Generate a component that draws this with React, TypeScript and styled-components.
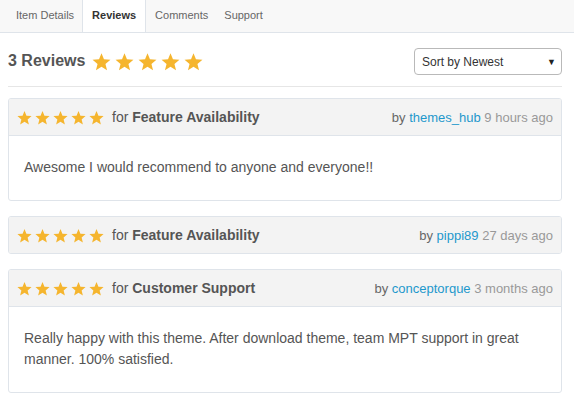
import React from "react";
import styled, { createGlobalStyle } from "styled-components";

const Global = createGlobalStyle`
  html, body { margin: 0; padding: 0; background: #fff; }
  body { font-family: "Liberation Sans", Arial, sans-serif; color: #555; }
  * { box-sizing: border-box; }
`;

const Page = styled.div`
  width: 574px;
  height: 393px;
  overflow: hidden;
`;

const TabBar = styled.nav`
  display: flex;
  height: 33px;
  padding-left: 8px;
  background: #f8f8f8;
  border-bottom: 1px solid #dfe4ea;
`;

const Tab = styled.div<{ $active?: boolean }>`
  display: flex;
  align-items: center;
  padding: 0 ${(p) => (p.$active ? 9 : 8)}px 3px;
  margin-right: ${(p) => (p.$active ? 1 : 0)}px;
  height: 32px;
  font-size: 11px;
  color: ${(p) => (p.$active ? "#333" : "#666")};
  font-weight: ${(p) => (p.$active ? 700 : 400)};
  background: ${(p) => (p.$active ? "#fff" : "transparent")};
  border-left: ${(p) => (p.$active ? "1px solid #dfe4ea" : "none")};
  border-right: ${(p) => (p.$active ? "1px solid #dfe4ea" : "none")};
`;

const Content = styled.div`
  padding: 0 12px 0 8px;
`;

const TitleRow = styled.div`
  display: flex;
  align-items: center;
  justify-content: space-between;
  height: 54px;
  border-bottom: 1px solid #e6e6e6;
  margin-bottom: 11px;
`;

const Title = styled.h2`
  display: flex;
  align-items: center;
  margin: 3px 0 0;
  font-size: 16px;
  font-weight: 700;
  color: #555;
  gap: 7px;
`;

const Stars = styled.span<{ $size: number; $gap: number }>`
  display: inline-flex;
  gap: ${(p) => p.$gap}px;
  svg {
    width: ${(p) => p.$size}px;
    height: ${(p) => p.$size}px;
    display: block;
  }
`;

const SortBox = styled.div`
  position: relative;
  display: flex;
  align-items: center;
  width: 148px;
  height: 27px;
  margin-top: 4px;
  padding: 0 7px;
  border: 1px solid #b9b9b9;
  border-radius: 4px;
  font-size: 12px;
  color: #333;
  background: #fff;
`;

const Caret = styled.span`
  position: absolute;
  right: 5px;
  top: 50%;
  transform: translateY(-50%);
  font-size: 9px;
  color: #222;
`;

const Card = styled.div`
  border: 1px solid #dfe4ea;
  border-radius: 3px;
  margin-bottom: 15px;
  overflow: hidden;
`;

const CardHeader = styled.div<{ $withBody?: boolean }>`
  display: flex;
  align-items: center;
  justify-content: space-between;
  height: ${(p) => (p.$withBody ? 37 : 36)}px;
  padding: 0 8px;
  background: #f3f3f3;
  border-bottom: ${(p) => (p.$withBody ? "1px solid #dfe4ea" : "none")};
`;

const Left = styled.div`
  display: flex;
  align-items: center;
  gap: 8px;
  font-size: 14px;
  color: #555;
  b {
    font-weight: 700;
  }
`;

const Meta = styled.div`
  font-size: 13px;
  color: #666;
`;

const Author = styled.a`
  color: #1e98cc;
  text-decoration: none;
`;

const Time = styled.span`
  color: #999;
`;

const Body = styled.p`
  margin: 0;
  padding: 21px 15px 22px;
  font-size: 14px;
  line-height: 21px;
  color: #555;
`;

const Star = () => (
  <svg viewBox="0 0 24 24">
    <path
      fill="#f5b52e"
      d="M12 1.5l3.1 7.6 8.2.6-6.3 5.3 2 8-7-4.4-7 4.4 2-8L.7 9.7l8.2-.6z"
    />
  </svg>
);

const StarRow = ({ size, gap }: { size: number; gap: number }) => (
  <Stars $size={size} $gap={gap}>
    {[0, 1, 2, 3, 4].map((i) => (
      <Star key={i} />
    ))}
  </Stars>
);

type Review = {
  topic: string;
  author: string;
  time: string;
  text?: string;
};

const reviews: Review[] = [
  {
    topic: "Feature Availability",
    author: "themes_hub",
    time: "9 hours ago",
    text: "Awesome I would recommend to anyone and everyone!!",
  },
  { topic: "Feature Availability", author: "pippi89", time: "27 days ago" },
  {
    topic: "Customer Support",
    author: "conceptorque",
    time: "3 months ago",
    text: "Really happy with this theme. After download theme, team MPT support in great manner. 100% satisfied.",
  },
];

export default function App() {
  return (
    <Page>
      <Global />
      <TabBar>
        <Tab>Item Details</Tab>
        <Tab $active>Reviews</Tab>
        <Tab>Comments</Tab>
        <Tab>Support</Tab>
      </TabBar>
      <Content>
        <TitleRow>
          <Title>
            3 Reviews <StarRow size={19} gap={4} />
          </Title>
          <SortBox>
            Sort by Newest
            <Caret>▼</Caret>
          </SortBox>
        </TitleRow>
        {reviews.map((r, i) => (
          <Card key={i}>
            <CardHeader $withBody={!!r.text}>
              <Left>
                <StarRow size={15} gap={3} />
                <span>
                  for <b>{r.topic}</b>
                </span>
              </Left>
              <Meta>
                by <Author href="#">{r.author}</Author> <Time>{r.time}</Time>
              </Meta>
            </CardHeader>
            {r.text && <Body>{r.text}</Body>}
          </Card>
        ))}
      </Content>
    </Page>
  );
}
